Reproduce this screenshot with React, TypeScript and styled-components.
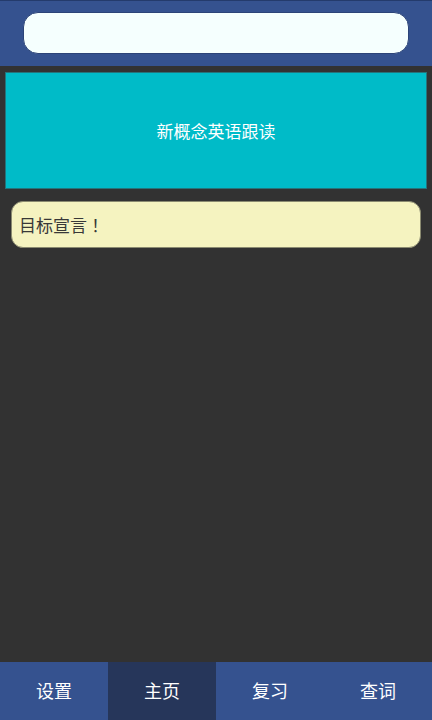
import React, { useState } from 'react';
import styled, { createGlobalStyle } from 'styled-components';

const GlobalStyle = createGlobalStyle`
  html, body {
    margin: 0;
    padding: 0;
    background-color: #323232;
    font-family: 'Noto Sans CJK SC', 'Noto Sans', sans-serif;
  }
`;

const StyledPage = styled.div`
  display: flex;
  flex-direction: column;
  width: 432px;
  height: 720px;
  background-color: #323232;
`;

const StyledHeader = styled.div`
  display: flex;
  align-items: center;
  justify-content: center;
  height: 66px;
  box-sizing: border-box;
  border-top: 1px solid #243b6c;
  background-color: #35528f;
`;

const StyledSearchBox = styled.input`
  width: 386px;
  height: 42px;
  margin-top: -2px;
  box-sizing: border-box;
  border: 1px solid #2c4478;
  border-radius: 15px;
  background-color: #f5fffe;
  outline: none;
`;

const StyledContent = styled.div`
  display: flex;
  flex: 1 1 auto;
  flex-direction: column;
  padding: 5px 5px 0 5px;
`;

const StyledBanner = styled.div`
  display: flex;
  align-items: center;
  justify-content: center;
  height: 117px;
  margin-top: 1px;
  box-sizing: border-box;
  border: 1px solid #26737a;
  background-color: #00bbc8;

  color: #ffffff;
  font-size: 17px;
`;

const StyledGoalCard = styled.div`
  display: flex;
  align-items: center;
  height: 47px;
  margin: 12px 6px 0 6px;
  padding-left: 7px;
  box-sizing: border-box;
  border: 1px solid #8a8a70;
  border-radius: 12px;
  background-color: #f5f3c0;

  color: #383838;
  font-family: 'Noto Sans CJK JP', 'Noto Sans CJK SC', sans-serif;
  font-size: 17px;
`;

const StyledTabBar = styled.div`
  display: grid;
  grid-template-columns: repeat(4, 1fr);
  height: 58px;
  background-color: #35528f;
`;

const StyledTab = styled.div<{ $active: boolean }>`
  display: flex;
  align-items: center;
  justify-content: center;
  padding-bottom: 2px;
  background-color: ${(p) => (p.$active ? '#26365a' : 'transparent')};

  color: #ffffff;
  font-size: 18px;
  cursor: pointer;
`;

const tabs = ['设置', '主页', '复习', '查词'];

const App = () => {
  const [active, setActive] = useState(1);

  return (
    <StyledPage>
      <GlobalStyle />
      <StyledHeader>
        <StyledSearchBox type="text" />
      </StyledHeader>
      <StyledContent>
        <StyledBanner>新概念英语跟读</StyledBanner>
        <StyledGoalCard>目标宣言！</StyledGoalCard>
      </StyledContent>
      <StyledTabBar>
        {tabs.map((t, i) => (
          <StyledTab key={t} $active={i === active} onClick={() => setActive(i)}>
            {t}
          </StyledTab>
        ))}
      </StyledTabBar>
    </StyledPage>
  );
};

export default App;
